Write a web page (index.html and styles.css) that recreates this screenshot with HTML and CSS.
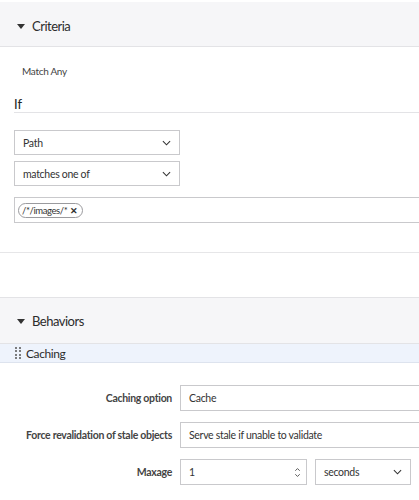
FILE: index.html
```html
<!DOCTYPE html>
<html>
<head>
<meta charset="utf-8">
<link rel="stylesheet" href="styles.css">
</head>
<body>
<div class="page">
  <div class="section-header criteria">
    <span class="caret"></span><span class="section-title">Criteria</span>
  </div>
  <div class="criteria-body">
    <div class="match-any">Match Any</div>
    <div class="if-label">If</div>
    <div class="select narrow"><span>Path</span><svg class="chev" viewBox="0 0 10 6" width="9" height="6"><path d="M1 1 L5 5 L9 1" fill="none" stroke="#333" stroke-width="1.2"/></svg></div>
    <div class="select narrow second"><span>matches one of</span><svg class="chev" viewBox="0 0 10 6" width="9" height="6"><path d="M1 1 L5 5 L9 1" fill="none" stroke="#333" stroke-width="1.2"/></svg></div>
    <div class="tag-input"><span class="tag">/*/images/* <b>&#x2715;</b></span></div>
  </div>
  <div class="divider"></div>
  <div class="section-header behaviors">
    <span class="caret"></span><span class="section-title">Behaviors</span>
  </div>
  <div class="behavior-row">
    <span class="dots"><i></i><i></i><i></i><i></i><i></i><i></i><i></i><i></i></span>
    <span class="behavior-name">Caching</span>
  </div>
  <div class="form">
    <div class="form-row">
      <label class="form-label">Caching option</label>
      <div class="field wide">Cache</div>
    </div>
    <div class="form-row">
      <label class="form-label">Force revalidation of stale objects</label>
      <div class="field wide">Serve stale if unable to validate</div>
    </div>
    <div class="form-row">
      <label class="form-label">Maxage</label>
      <div class="field number"><span>1</span><svg class="spin" viewBox="0 0 8 12" width="7" height="11"><path d="M1.5 4 L4 1.5 L6.5 4 M1.5 8 L4 10.5 L6.5 8" fill="none" stroke="#444" stroke-width="1"/></svg></div>
      <div class="field unit"><span>seconds</span><svg class="chev" viewBox="0 0 10 6" width="9" height="6"><path d="M1 1 L5 5 L9 1" fill="none" stroke="#333" stroke-width="1.2"/></svg></div>
    </div>
  </div>
</div>
</body>
</html>
```

FILE: styles.css
```css
html, body {
  margin: 0;
  padding: 0;
  background: #fff;
}
body {
  font-family: "Lato", "Open Sans", sans-serif;
  color: #333;
  overflow: hidden;
}
.page {
  width: 419px;
  overflow: hidden;
}
.section-header {
  background: #f6f6f8;
  border-bottom: 1px solid #e3e3e6;
  display: flex;
  align-items: center;
  padding-left: 17px;
  box-sizing: border-box;
  height: 47px;
}
.section-header.criteria {
  margin-top: 2px;
  height: 45px;
  padding-top: 3px;
}
.caret {
  width: 0;
  height: 0;
  border-left: 4px solid transparent;
  border-right: 4px solid transparent;
  border-top: 5px solid #333;
  margin-right: 7px;
  margin-top: 1px;
}
.section-title {
  font-size: 13px;
  letter-spacing: -0.5px;
  color: #2c2c2c;
}
.criteria-body {
  padding-left: 14px;
}
.match-any {
  font-size: 10px;
  letter-spacing: -0.3px;
  line-height: 14px;
  color: #444;
  padding-left: 8px;
  margin-top: 17px;
}
.if-label {
  font-size: 13px;
  line-height: 16px;
  margin-top: 17px;
  border-bottom: 1px solid #e3e3e6;
  color: #222;
  padding-top: 1px;
}
.select {
  box-sizing: border-box;
  height: 25px;
  border: 1px solid #c9c9cc;
  display: flex;
  align-items: center;
  justify-content: space-between;
  padding: 0 8px 0 8px;
  font-size: 10.5px;
  letter-spacing: -0.3px;
  color: #333;
}
.narrow {
  width: 166px;
  margin-top: 17px;
}
.narrow.second {
  margin-top: 6px;
}
.tag-input {
  box-sizing: border-box;
  height: 26px;
  margin-top: 11px;
  margin-right: -4px;
  border: 1px solid #c9c9cc;
  display: flex;
  align-items: center;
  padding-left: 3px;
}
.tag {
  box-sizing: border-box;
  height: 15px;
  border: 1px solid #9a9a9e;
  border-radius: 8px;
  padding: 0 4px 0 3px;
  font-size: 9.5px;
  letter-spacing: -0.4px;
  line-height: 13px;
  color: #333;
  display: flex;
  align-items: center;
  gap: 3px;
}
.tag b {
  font-size: 9px;
  font-weight: bold;
}
.divider {
  height: 0;
  border-top: 1px solid #e6e6e8;
  margin-top: 29px;
}
.behaviors {
  margin-top: 44px;
  border-top: 1px solid #e3e3e6;
}
.behavior-row {
  height: 18px;
  background: #eef3fc;
  border-bottom: 1px solid #dde3ee;
  display: flex;
  align-items: center;
  padding-left: 15px;
}
.dots {
  display: grid;
  grid-template-columns: 2px 2px;
  grid-auto-rows: 2px;
  column-gap: 2px;
  row-gap: 1.5px;
  margin-right: 5px;
}
.dots i {
  display: block;
  width: 2px;
  height: 2px;
  border-radius: 1px;
  background: #555;
}
.behavior-name {
  font-size: 12px;
  letter-spacing: -0.4px;
  color: #2c2c2c;
}
.form {
  padding-top: 22px;
  display: flex;
  flex-direction: column;
  gap: 11px;
}
.form-row {
  display: flex;
  align-items: center;
  gap: 8px;
}
.form-label {
  width: 172px;
  flex: none;
  text-align: right;
  font-size: 10.5px;
  letter-spacing: -0.3px;
  font-weight: bold;
  color: #444;
}
.field {
  box-sizing: border-box;
  height: 26px;
  border: 1px solid #c9c9cc;
  display: flex;
  align-items: center;
  justify-content: space-between;
  padding: 0 8px;
  font-size: 10.5px;
  letter-spacing: -0.3px;
  color: #333;
}
.wide {
  flex: 1;
  margin-right: -4px;
}
.number {
  width: 127px;
  padding-right: 5px;
}
.unit {
  width: 96px;
}
.chev, .spin {
  flex: none;
}
```
